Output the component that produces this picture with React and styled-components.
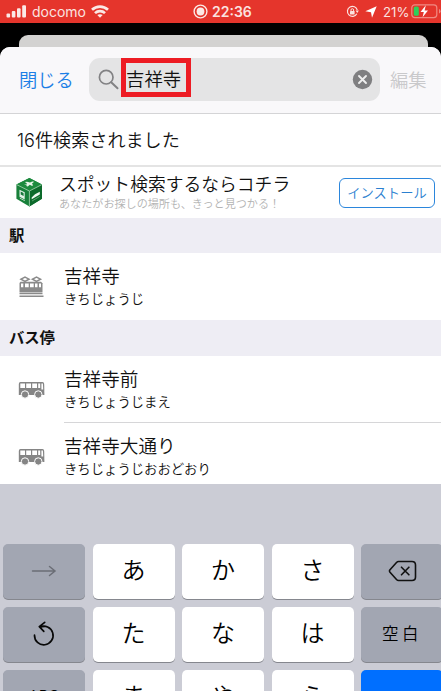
import React from 'react';
import styled, { createGlobalStyle } from 'styled-components';

const Global = createGlobalStyle`
  * { box-sizing: border-box; }
  html, body { margin: 0; padding: 0; overflow: hidden; }
  body { font-family: Inter, "Noto Sans CJK JP", sans-serif; font-weight: 350; color: #111; background: #000; }
  svg { display: block; flex: none; }
`;

const Screen = styled.div`
  width: 441px; height: 691px; overflow: hidden; background: #000;
  display: flex; flex-direction: column;
`;
const StatusBar = styled.header`
  height: 23px; flex: none; background: #e5352c; color: #fbe3e0;
  display: grid; grid-template-columns: 193px 153px 1fr; align-items: center;
  font-size: 15px; font-weight: 500; line-height: 22px;
`;
const StatusGroup = styled.div`
  display: flex; align-items: center; gap: ${p => p.$gap || 5}px;
  padding-left: ${p => p.$left || 0}px;
`;
const StatusText = styled.span`
  font-size: ${p => p.$size || 15}px; font-weight: ${p => p.$weight || 500}; white-space: nowrap;
`;
const BackCard = styled.div`
  height: 20px; flex: none; margin: 12px 13px -8px 19px;
  background: #d3d2d1; border-radius: 9px 9px 0 0;
`;
const Sheet = styled.main`
  position: relative; flex: 1; min-height: 0; background: #fff; border-radius: 10px 10px 0 0;
  overflow: hidden; display: flex; flex-direction: column;
`;
const SearchHeader = styled.div`
  height: 67px; flex: none; background: #f9f8fa; border-bottom: 1px solid #d4d4d6;
  display: flex; align-items: center; padding: 0 0 1px 19px;
`;
const TextButton = styled.button`
  border: 0; background: none; padding: 0; font: inherit; white-space: nowrap;
  font-size: 18.3px; line-height: 26px; color: ${p => (p.$muted ? '#c9c9cb' : '#1c7fe6')};
  width: ${p => p.$width}px; text-align: left;
`;
const SearchField = styled.div`
  width: 291px; height: 43px; border-radius: 11px; background: #e4e4e5; margin-right: 10px;
  display: flex; align-items: center; padding: 0 7px 0 9px;
`;
const Highlight = styled.div`
  width: 70px; height: 39px; border: 5px solid #ed1c24; margin: -4px auto 0 2px;
  font-size: 18.4px; line-height: 32px; white-space: nowrap;
`;
const ResultCount = styled.div`
  height: 53px; flex: none; border-bottom: 2px solid #e4e4e4; padding: 0 0 0 17px;
  font-size: 18.1px; line-height: 52px;
`;
const Promo = styled.section`
  height: 51px; flex: none; display: flex; align-items: center; padding: 0 6px 0 15px;
`;
const PromoText = styled.div`margin-left: 15px; margin-right: auto; margin-top: 0; white-space: nowrap;`;
const PromoTitle = styled.div`font-size: 17.8px; line-height: 23px;`;
const PromoNote = styled.div`font-size: 11.1px; line-height: 17px; color: #b3b3b3;`;
const InstallButton = styled.button`
  width: 96px; height: 30px; border: 1.5px solid #2b86dc; border-radius: 6px; background: #fff;
  color: #2b80d0; font: inherit; font-size: 13.3px; line-height: 26px; padding: 0; white-space: nowrap;
`;
const SectionTitle = styled.h2`
  height: ${p => p.$height}px; flex: none; margin: 0; padding-left: 9px; background: #eeedf4;
  font-size: 15.3px; font-weight: 700; line-height: ${p => p.$height}px;
`;
const Row = styled.div`
  height: ${p => p.$height}px; flex: none; display: flex; padding-left: 18px;
`;
const RowIcon = styled.div`width: 46px; padding-top: ${p => p.$top}px;`;
const RowBody = styled.div`
  flex: 1; padding-top: ${p => p.$top}px; white-space: nowrap;
  border-bottom: ${p => (p.$line ? '1px solid #d6d6d8' : '0')};
`;
const Name = styled.div`font-size: 18.6px; line-height: 26px;`;
const Reading = styled.div`font-size: 13.35px; line-height: 20px;`;
const Keyboard = styled.section`
  flex: none; height: 208px; background: #cbccd5; padding: 60px 0 0 3px; overflow: hidden;
  display: grid; grid-template-columns: repeat(5, 82px); grid-auto-rows: 55px;
  column-gap: 7.5px; row-gap: 8px;
`;
const KEY_COLORS = { letter: '#fff', side: '#a2a6b2', action: '#006fff' };
const Key = styled.button`
  border: 0; padding: 0 0 ${p => p.$lift || 2}px; border-radius: 5px; background: ${p => KEY_COLORS[p.$kind]};
  box-shadow: 0 1px 0 #85878e; font: inherit; color: #000; white-space: nowrap;
  font-size: ${p => p.$size || 24}px; letter-spacing: ${p => p.$track || 0}px; line-height: 40px;
  display: flex; justify-content: center; align-items: center;
`;

const Signal = () => (
  <svg width="21" height="13" viewBox="0 0 21 13" fill="#fbe9e6">
    <rect x="0.5" y="8.5" width="3.6" height="4" rx="1" /><rect x="5.8" y="6" width="3.6" height="6.5" rx="1" />
    <rect x="11" y="3.2" width="3.6" height="9.3" rx="1" /><rect x="16.2" y="0.3" width="3.8" height="12.2" rx="1" />
  </svg>
);
const Wifi = () => (
  <svg width="18" height="13" viewBox="0 0 18 13" fill="none" stroke="#fbe9e6" strokeWidth="2.7">
    <path d="M1 4.8C5.5.5 12.5.5 17 4.8M4 8.1c2.8-2.7 7.2-2.7 10 0" />
    <path d="M6.3 10.1c1.5-1.3 3.9-1.3 5.4 0L9 12.8z" fill="#fbe9e6" stroke="none" />
  </svg>
);
const Recording = () => (
  <svg width="15" height="15" viewBox="0 0 15 15"><circle cx="7.5" cy="7.5" r="6.4" fill="none" stroke="#fbe9e6" strokeWidth="1.4" /><circle cx="7.5" cy="7.5" r="3.9" fill="#fbe9e6" /></svg>
);
const RotationLock = () => (
  <svg width="13" height="13" viewBox="0 0 13 13" fill="none" stroke="#fbe3e0">
    <path d="M10.8 8.8A5 5 0 1 1 11.3 5.2" strokeWidth="1.2" /><path d="M9.5 5.6h3.4l-1.6 2.3z" fill="#fbe3e0" stroke="none" />
    <rect x="4" y="6" width="4.6" height="3.6" rx=".5" fill="#fbe3e0" stroke="none" /><path d="M5 6V5a1.3 1.3 0 0 1 2.6 0v1" />
  </svg>
);
const Location = () => (
  <svg width="12" height="12" viewBox="0 0 12 12" fill="#fff"><path d="M11.7.3 7 11.7 6 6.2.3 5.2z" /></svg>
);
const Battery = () => (
  <svg width="31" height="15" viewBox="0 0 31 15">
    <rect x=".8" y=".8" width="25" height="12.8" rx="3" fill="none" stroke="#f08a82" strokeWidth="1.2" />
    <path d="M28 5v4.6q1.6-.6 1.6-2.3T28 5" fill="#f08a82" />
    <rect x="2.8" y="2.6" width="5" height="9.2" rx="1.5" fill="#2fd05a" />
    <path d="M14.8 1.3 9.5 8h3.3l-1.2 5.2L17 6.4h-3.4z" fill="#fff" />
  </svg>
);
const Magnifier = () => (
  <svg width="21" height="21" viewBox="0 0 21 21" fill="none" stroke="#828284" strokeWidth="1.7"><circle cx="8.2" cy="8.2" r="6.8" /><path d="m13.2 13.2 6.3 6" strokeWidth="2" strokeLinecap="round" /></svg>
);
const Clear = () => (
  <svg width="21" height="21" viewBox="0 0 21 21"><circle cx="10.5" cy="10.5" r="9.7" fill="#7f7f81" /><path d="m7 7 7 7m0-7-7 7" stroke="#eee" strokeWidth="1.9" strokeLinecap="round" /></svg>
);
const Cube = () => (
  <svg width="29" height="31" viewBox="0 0 29 31">
    <path d="M14.4 1 27 7.4v14.3L14.4 29.5 1.4 21.7V7.4z" fill="#18803a" />
    <path d="M14.4 1 27 7.4l-12.6 6.4L1.4 7.4z" fill="#1c8b3e" /><path d="M14.4 13.8 27 7.4v14.3l-12.6 7.8z" fill="#0c6a2b" />
    <path d="M1.6 7.6 14.4 14 26.8 7.6M14.4 14v15" fill="none" stroke="#9bcda8" strokeWidth=".9" />
    <path d="m9 7.8 3.2-1.3L9.8 5l2.2-.2 3 .8 2.2-1.2 2 .3-2.2 1.8 1.2 2-1.6.2-1.8-1-2 1.7-1.5-.4.5-1.6z" fill="#e7f5e9" />
    <path d="m4.5 12.7 5.2 2.5v7.3l-5.2-2.7z" fill="#e5f1e7" /><path d="m5.7 14.6 2.9 1.4v3l-2.9-1.4z" fill="#17783a" /><path d="m4.8 21.1 5 2.6" stroke="#b6d9bd" />
    <path d="m16.7 20.6 3.3-3.4 4.8-2.4v2.7l-8.1 4.8z" fill="#eef8ef" /><path d="m17 24 7.8-4.6" stroke="#7cb88a" strokeWidth=".7" />
  </svg>
);
const Train = () => (
  <svg width="27" height="22" viewBox="0 0 27 22" fill="none" stroke="#8a8a8a">
    <path d="m3 3.2 4-2 4 2-4 2.2zM14.5 3.2l4-2 4 2-4 2.2z" strokeWidth="1.5" />
    <path d="M2.5 5.8H23l1.5 1.5V16h-23V7z" fill="#8a8a8a" stroke="none" />
    <path d="M3 7.5h2.3v3.8H3zM7 7.5h3.7v3.8H7zM12 7.5h3.7v3.8H12zM17 7.5h2.5v3.8H17zM21 7.5h2v3.8h-2z" fill="#fff" stroke="none" />
    <path d="M1.5 17.4h23M1.5 20.2h24" strokeWidth="1.6" />
  </svg>
);
const Bus = () => (
  <svg width="27" height="18" viewBox="0 0 27 18">
    <path d="M2.5 1h22q1.500 0 1.700 2l.2 11H.8V3q0-2 1.700-2z" fill="#858585" />
    <path d="M2.300 2.500h4.700V7H2.300zM8.200 2.500h4.800V7H8.200zM14.200 2.500H19V7h-4.800zM20.200 2.500h2V7h-2zM23.400 2.500h1.500l.3 6h-1.800z" fill="#fff" />
    <circle cx="7" cy="13.500" r="3.700" fill="#858585" stroke="#fff" strokeWidth="1" /><circle cx="20.300" cy="13.500" r="3.700" fill="#858585" stroke="#fff" strokeWidth="1" />
  </svg>
);
const Arrow = () => (
  <svg width="26" height="12" viewBox="0 0 26 12" fill="none" stroke="#6b6e76" strokeWidth="1.5" strokeLinecap="round"><path d="M1.5 6h22M18.5 1.500 24 6l-5.500 4.500" /></svg>
);
const Undo = () => (
  <svg width="22" height="26" viewBox="0 0 22 26" fill="none" stroke="#080808" strokeWidth="1.7" strokeLinecap="round" strokeLinejoin="round"><path d="M1.500 14.200a9.300 9.300 0 1 0 5.300-8.100q2-.8 5-.8M11.700 1.300 6.300 5.700l4.500 4.600" /></svg>
);
const Backspace = () => (
  <svg width="29" height="22" viewBox="0 0 29 22" fill="none" stroke="#111" strokeWidth="1.6" strokeLinecap="round" strokeLinejoin="round"><path d="M10.5 1.500H24q3.500 0 3.500 3.500v12q0 3.500-3.500 3.500H10.500q-1 0-2-1L2 12.200q-1-1.200 0-2.400l6.500-7.300q1-1 2-1zM13.500 7.200l7.400 7.600m0-7.600-7.400 7.600" /></svg>
);

const KEYS = [
  { kind: 'side', icon: <Arrow /> }, { label: 'あ' }, { label: 'か' }, { label: 'さ' }, { kind: 'side', icon: <Backspace /> },
  { kind: 'side', icon: <Undo /> }, { label: 'た' }, { label: 'な' }, { label: 'は' }, { kind: 'side', label: '空白', size: 16.5, track: 3.5 },
  { kind: 'side', label: 'ABC', size: 15, lift: 4 }, { label: 'ま' }, { label: 'や' }, { label: 'ら' }, { kind: 'action' },
];

const Result = ({ height, icon, iconTop, top, name, reading, line }) => (
  <Row $height={height}>
    <RowIcon $top={iconTop}>{icon}</RowIcon>
    <RowBody $top={top} $line={line}><Name>{name}</Name><Reading>{reading}</Reading></RowBody>
  </Row>
);

export default function App() {
  return (
    <Screen>
      <Global />
      <StatusBar>
        <StatusGroup $left={6}><Signal /><StatusText $weight={400} $size={14}>docomo</StatusText><Wifi /></StatusGroup>
        <StatusGroup $gap={4}><Recording /><StatusText $weight={600} $size={14}>22:36</StatusText></StatusGroup>
        <StatusGroup $gap={2}>
          <StatusGroup $gap={6}><RotationLock /><Location /><StatusText $size={13.2} $weight={400}>21%</StatusText></StatusGroup>
          <Battery />
        </StatusGroup>
      </StatusBar>
      <BackCard />
      <Sheet>
        <SearchHeader>
          <TextButton $width={70}>閉じる</TextButton>
          <SearchField><Magnifier /><Highlight>吉祥寺</Highlight><Clear /></SearchField>
          <TextButton $muted $width={45}>編集</TextButton>
        </SearchHeader>
        <ResultCount>16件検索されました</ResultCount>
        <Promo>
          <Cube />
          <PromoText><PromoTitle>スポット検索するならコチラ</PromoTitle><PromoNote>あなたがお探しの場所も、きっと見つかる！</PromoNote></PromoText>
          <InstallButton>インストール</InstallButton>
        </Promo>
        <SectionTitle $height={35}>駅</SectionTitle>
        <Result height={67} icon={<Train />} iconTop={23} top={10} name="吉祥寺" reading="きちじょうじ" />
        <SectionTitle $height={36}>バス停</SectionTitle>
        <Result height={67} icon={<Bus />} iconTop={25} top={10} name="吉祥寺前" reading="きちじょうじまえ" line />
        <Result height={61} icon={<Bus />} iconTop={25} top={10} name="吉祥寺大通り" reading="きちじょうじおおどおり" />
        <Keyboard>
          {KEYS.map((key, i) => (
            <Key key={i} $kind={key.kind || 'letter'} $size={key.size} $track={key.track} $lift={key.lift}>{key.icon || key.label}</Key>
          ))}
        </Keyboard>
      </Sheet>
    </Screen>
  );
}
